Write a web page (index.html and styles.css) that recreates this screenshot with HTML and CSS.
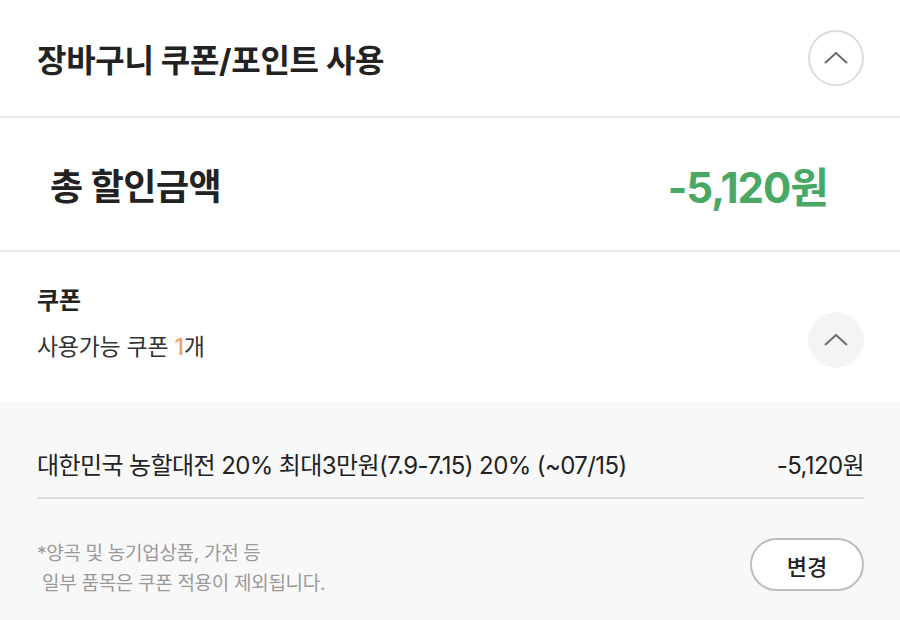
FILE: index.html
```html
<!DOCTYPE html>
<html lang="ko">
<head>
  <meta charset="UTF-8" />
  <meta name="viewport" content="width=device-width, initial-scale=1.0"/>
  <title>장바구니 쿠폰/포인트 사용</title>
  <link rel="stylesheet" href="styles.css">
</head>
<body>
  <div class="panel">
    <div class="panel-head">
      <h1 class="panel-title">장바구니 쿠폰/포인트 사용</h1>
      <button class="circle-btn outline" aria-label="접기">
        <svg width="24" height="12" viewBox="0 0 24 12"><path d="M1 11 L12 1 L23 11" fill="none" stroke="#6b6b6b" stroke-width="2"/></svg>
      </button>
    </div>

    <div class="total">
      <span class="total-label">총 할인금액</span>
      <span class="total-amount">-5,120원</span>
    </div>

    <div class="coupon">
      <div class="coupon-info">
        <div class="coupon-title">쿠폰</div>
        <div class="coupon-count">사용가능 쿠폰 <em>1</em>개</div>
      </div>
      <button class="circle-btn filled" aria-label="접기">
        <svg width="24" height="12" viewBox="0 0 24 12"><path d="M1 11 L12 1 L23 11" fill="none" stroke="#6b6b6b" stroke-width="2"/></svg>
      </button>
    </div>

    <div class="coupon-list">
      <div class="coupon-row">
        <span class="coupon-name">대한민국 농할대전 20% 최대3만원(7.9-7.15) 20% (~07/15)</span>
        <span class="coupon-price">-5,120원</span>
      </div>
      <div class="coupon-foot">
        <p class="note">*양곡 및 농기업상품, 가전 등<br>&nbsp;일부 품목은 쿠폰 적용이 제외됩니다.</p>
        <button class="change-btn">변경</button>
      </div>
    </div>
  </div>
</body>
</html>
```

FILE: styles.css
```css
body {
  margin: 0;
  padding: 0;
  background: #fff;
  font-family: Inter, "Noto Sans CJK KR", sans-serif;
  color: #222;
}
.panel {
  width: 900px;
  height: 620px;
  overflow: hidden;
}
.panel-head {
  height: 116px;
  display: flex;
  align-items: center;
  justify-content: space-between;
  padding: 0 36px 0 37px;
  border-bottom: 2px solid #e6e6e6;
}
.panel-title {
  margin: 0;
  font-size: 32px;
  font-weight: 700;
  letter-spacing: -0.3px;
  color: #222;
}
.circle-btn {
  width: 56px;
  height: 56px;
  border-radius: 50%;
  padding: 0;
  display: flex;
  align-items: center;
  justify-content: center;
  cursor: pointer;
}
.circle-btn.outline {
  background: #fff;
  border: 2px solid #dcdcdc;
}
.circle-btn.filled {
  background: #f4f4f4;
  border: none;
  margin-top: 26px;
}
.total {
  height: 132px;
  display: flex;
  align-items: center;
  justify-content: space-between;
  padding: 0 72px 0 50px;
  border-bottom: 2px solid #e6e6e6;
}
.total-label {
  font-size: 36px;
  font-weight: 700;
  letter-spacing: -0.5px;
}
.total-amount {
  font-size: 42px;
  font-weight: 700;
  color: #4aa865;
  letter-spacing: -1px;
}
.coupon {
  height: 150px;
  display: flex;
  align-items: center;
  justify-content: space-between;
  padding: 0 36px 0 37px;
  box-sizing: border-box;
}
.coupon-info {
  margin-top: -12px;
}
.coupon-title {
  font-size: 24px;
  font-weight: 700;
  margin-bottom: 12px;
}
.coupon-count {
  font-size: 23px;
  color: #333;
  letter-spacing: -0.3px;
}
.coupon-count em {
  font-style: normal;
  font-weight: 500;
  color: #f0a366;
}
.coupon-list {
  background: #f8f8f8;
  padding: 0 36px 0 37px;
  height: 218px;
}
.coupon-row {
  height: 97px;
  display: flex;
  align-items: center;
  justify-content: space-between;
  border-bottom: 2px solid #dedede;
  font-size: 24px;
  color: #222;
  letter-spacing: -0.6px;
  padding-top: 27px;
  box-sizing: border-box;
}
.coupon-foot {
  display: flex;
  align-items: flex-start;
  justify-content: space-between;
  padding-top: 34px;
}
.note {
  margin: 6px 0 0;
  font-size: 19px;
  line-height: 30px;
  color: #9a9a9a;
  letter-spacing: -0.3px;
}
.change-btn {
  margin-top: 5px;
  width: 114px;
  height: 53px;
  border: 2px solid #bdbdbd;
  border-radius: 27px;
  background: #fff;
  font-family: inherit;
  font-size: 22px;
  font-weight: 500;
  color: #222;
  cursor: pointer;
}
```
